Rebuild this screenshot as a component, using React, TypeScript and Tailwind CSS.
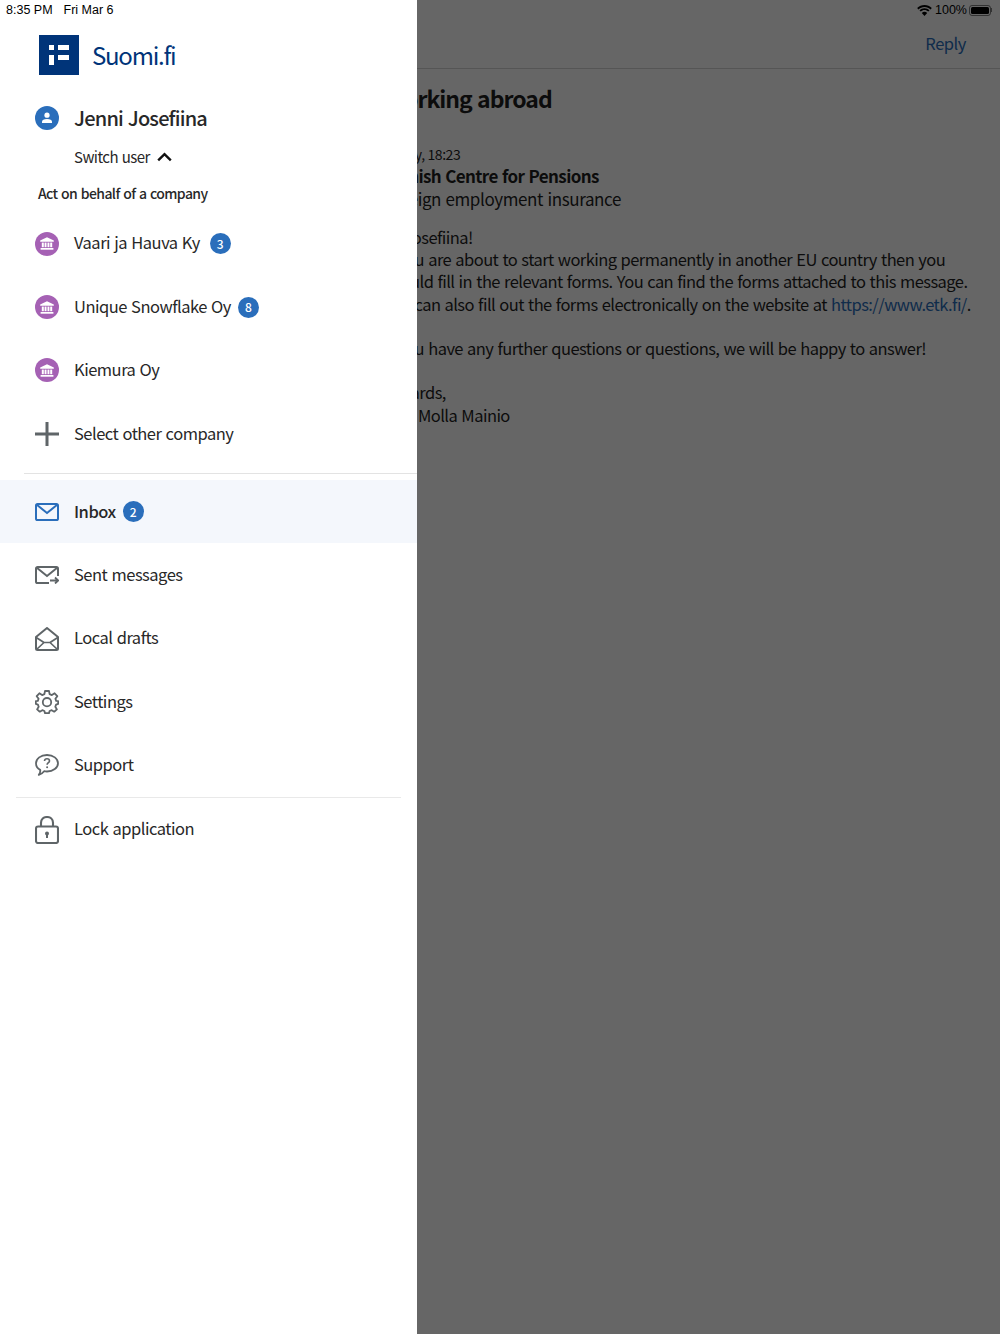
import React from "react";

const font = "font-['Noto_Sans_CJK_SC','Noto_Sans',sans-serif]";

const Badge = ({ n }: { n: number }) => (
  <span className="flex h-[21px] w-[21px] items-center justify-center rounded-full bg-[#2a6ebb] text-[12px] font-medium tracking-normal text-white">
    {n}
  </span>
);

const BankIcon = () => (
  <span className="flex h-6 w-6 items-center justify-center rounded-full bg-[#a561b4]">
    <svg width="14" height="13" viewBox="0 0 14 13" fill="#fff">
      <path d="M7 0.3 L13.8 3.4 V4.8 H0.2 V3.4 Z" />
      <rect x="1.8" y="5.6" width="2" height="4.6" />
      <rect x="4.6" y="5.6" width="1.9" height="4.6" />
      <rect x="7.5" y="5.6" width="1.9" height="4.6" />
      <rect x="10.2" y="5.6" width="2" height="4.6" />
      <rect x="0.6" y="11" width="12.8" height="1.7" />
    </svg>
  </span>
);

const PlusIcon = () => (
  <svg width="24" height="24" viewBox="0 0 24 24" fill="#5f6568">
    <rect x="10.5" y="0" width="3" height="24" />
    <rect x="0" y="10.5" width="24" height="3" />
  </svg>
);

const InboxIcon = () => (
  <svg width="24" height="18" viewBox="0 0 24 18" fill="none" stroke="#2a6ebb" strokeWidth="2">
    <rect x="1" y="1" width="22" height="16" rx="1.6" />
    <path d="M1.5 1.5 L12 10 L22.5 1.5" />
  </svg>
);

const SentIcon = () => (
  <svg width="24" height="18" viewBox="0 0 24 18" fill="none" stroke="#5f6568" strokeWidth="2">
    <path d="M14 17 H2.6 A1.6 1.6 0 0 1 1 15.4 V2.6 A1.6 1.6 0 0 1 2.6 1 H21.4 A1.6 1.6 0 0 1 23 2.6 V10" />
    <path d="M1.5 1.5 L12 10 L22.5 1.5" />
    <path d="M15 14.5 H23 M20 11.5 L23.2 14.5 L20 17.5" strokeWidth="1.8" />
  </svg>
);

const DraftsIcon = () => (
  <svg width="24" height="24" viewBox="0 0 24 24" fill="none" stroke="#5f6568" strokeWidth="2" strokeLinejoin="round">
    <path d="M1 10 L12 1 L23 10 V21.5 A1.5 1.5 0 0 1 21.5 23 H2.5 A1.5 1.5 0 0 1 1 21.5 Z" />
    <path d="M1.5 22.5 L9 15.5 H15 L22.5 22.5 M1.2 10.5 L9 15.5 M22.8 10.5 L15 15.5" strokeWidth="1.7" />
  </svg>
);

const GearIcon = () => (
  <svg width="24" height="24" viewBox="0 0 24 24" fill="none" stroke="#5f6568" strokeWidth="1.8" strokeLinejoin="round">
    <path d="M10 1 H14 L14.6 4.1 L16.9 5.1 L19.6 3.3 L22.3 6.2 L20.4 8.8 L21.2 10.9 L23.2 11.2 V13.8 L21.1 14.6 L20.3 16.7 L21.9 19.4 L19.2 21.7 L16.7 20.2 L14.6 21 L14 23.2 H10 L9.4 21 L7.3 20.2 L4.8 21.7 L2.1 19.4 L3.7 16.7 L2.9 14.6 L0.8 13.8 V11.2 L2.8 10.9 L3.6 8.8 L1.7 6.2 L4.4 3.3 L7.1 5.1 L9.4 4.1 Z" />
    <circle cx="12" cy="12.2" r="4.2" />
  </svg>
);

const SupportIcon = () => (
  <svg width="24" height="22" viewBox="0 0 24 22" fill="none" stroke="#5f6568" strokeWidth="1.8" strokeLinejoin="round">
    <path d="M12 1 C18.2 1 23 4.6 23 9.2 C23 13.8 18.2 17.5 12 17.5 C11 17.5 10 17.4 9.1 17.2 C7.8 18.9 6.2 20.2 3.8 20.9 C5 19.4 5.5 17.8 5.2 15.9 C2.5 14.4 1 12 1 9.2 C1 4.6 5.8 1 12 1 Z" />
    <path d="M9.5 7 C9.6 5.5 10.7 4.8 12 4.8 C13.4 4.8 14.5 5.6 14.5 6.9 C14.5 8.6 12.1 8.7 12.1 10.8" strokeWidth="1.6" />
    <circle cx="12.1" cy="13.2" r="1" fill="#5f6568" stroke="none" />
  </svg>
);

const LockIcon = () => (
  <svg width="24" height="28" viewBox="0 0 24 28" fill="none" stroke="#5f6568" strokeWidth="2.1">
    <rect x="1" y="10.5" width="22" height="16.5" rx="2" />
    <path d="M6 10.5 V6.8 C6 3.2 8.6 1 12 1 C15.4 1 18 3.2 18 6.8 V10.5" />
    <circle cx="12" cy="17.4" r="2" fill="#5f6568" stroke="none" />
    <rect x="11" y="17.5" width="2" height="4.5" fill="#5f6568" stroke="none" />
  </svg>
);

const Row = ({
  icon,
  label,
  badge,
  active,
  badgeGap = "ml-[7px]",
}: {
  icon: React.ReactNode;
  label: string;
  badge?: number;
  active?: boolean;
  badgeGap?: string;
}) => (
  <div className={`flex h-[63.4px] items-center ${active ? "bg-[#f4f7fc]" : ""}`}>
    <div className="flex w-[74px] shrink-0 pl-[35px]">{icon}</div>
    <span className={`pb-[2px] text-[16.5px] leading-none tracking-[-0.5px] text-[#282828] [word-spacing:1px] ${active ? "font-medium" : ""}`}>{label}</span>
    {badge !== undefined && <span className={badgeGap}><Badge n={badge} /></span>}
  </div>
);

const BodyLine = ({ children, className = "" }: { children: React.ReactNode; className?: string }) => (
  <p className={`whitespace-nowrap text-[16.5px] leading-[22.2px] text-[#1f1f1f] [word-spacing:1px] ${className}`}>{children}</p>
);

export default function App() {
  return (
    <div className={`relative h-[1334px] w-[1000px] overflow-hidden bg-[#ffffff] ${font}`}>
      {/* message page behind the drawer */}
      <div className="flex h-full flex-col">
        <div className="flex h-[69px] flex-col border-b border-[#d5d5d5]">
          <div className="flex h-[20px] items-center justify-end gap-[2px] pr-[8px] font-['Liberation_Sans',sans-serif] text-[12.5px] text-black">
            <svg className="mr-[1px]" width="15" height="11" viewBox="0 0 15 11" fill="#000">
              <path d="M7.5 2 C9.9 2 12 2.9 13.6 4.4 L14.8 3.1 C12.9 1.2 10.3 0 7.5 0 C4.7 0 2.1 1.2 0.2 3.1 L1.4 4.4 C3 2.9 5.1 2 7.5 2 Z" />
              <path d="M7.5 5 C8.9 5 10.3 5.6 11.3 6.6 L12.5 5.3 C11.2 4 9.4 3.2 7.5 3.2 C5.6 3.2 3.8 4 2.5 5.3 L3.7 6.6 C4.7 5.6 6.1 5 7.5 5 Z" />
              <path d="M7.5 11 L10.2 7.9 C9.5 7.2 8.5 6.8 7.5 6.8 C6.5 6.8 5.5 7.2 4.8 7.9 Z" />
            </svg>
            <span>100%</span>
            <span className="flex items-center">
              <span className="flex h-[11px] w-[22px] items-center rounded-[3px] border border-black/50 p-[1px]">
                <span className="h-full w-full rounded-[1.5px] bg-black" />
              </span>
              <span className="h-[4px] w-[1px] bg-black/50" />
            </span>
          </div>
          <div className="flex flex-1 items-center justify-end pb-[1px] pr-[34px]">
            <span className="text-[16.5px] tracking-[-0.45px] text-[#2a6ebb]">Reply</span>
          </div>
        </div>
        <div className="pl-[384px]">
          <h1 className="mt-[14px] whitespace-nowrap text-[23px] font-bold leading-[30px] tracking-[-1px] text-[#1f1f1f] [word-spacing:1px]">Working abroad</h1>
          <p className="mt-[32px] whitespace-nowrap text-[14px] leading-[18px] tracking-[-0.4px] text-[#1f1f1f]">Today, 18:23</p>
          <BodyLine className="mt-[2px] text-[17px] font-semibold tracking-[-0.62px]">Finnish Centre for Pensions</BodyLine>
          <BodyLine className="mt-[1px] text-[17px] tracking-[-0.4px]">Foreign employment insurance</BodyLine>
          <BodyLine className="mt-[15.5px] tracking-[-0.56px]">Hi Josefiina!</BodyLine>
          <BodyLine className="tracking-[-0.56px]">If you are about to start working permanently in another EU country then you</BodyLine>
          <BodyLine className="tracking-[-0.56px]">should fill in the relevant forms. You can find the forms attached to this message.</BodyLine>
          <BodyLine className="tracking-[-0.56px]">
            You can also fill out the forms electronically on the website at{" "}
            <span className="text-[#2a6ebb]">https://www.etk.fi/</span>.
          </BodyLine>
          <BodyLine className="mt-[22.2px] tracking-[-0.56px]">If you have any further questions or questions, we will be happy to answer!</BodyLine>
          <BodyLine className="mt-[22.2px] tracking-[-0.56px]">Regards,</BodyLine>
          <BodyLine className="tracking-[-0.56px]">Mrs. Molla Mainio</BodyLine>
        </div>
      </div>

      {/* dim layer */}
      <div className="absolute inset-0 bg-black/60" />

      {/* drawer */}
      <aside className="absolute inset-y-0 left-0 w-[417px] bg-white">
        <div className="flex h-[20px] items-center gap-[11px] pl-[6px] font-['Liberation_Sans',sans-serif] text-[12.5px] text-black">
          <span>8:35 PM</span>
          <span>Fri Mar 6</span>
        </div>
        <div className="mt-[15px] flex items-center pl-[39px]">
          <svg width="40" height="40" viewBox="0 0 40 40">
            <rect width="40" height="40" fill="#003479" />
            <g fill="#fff">
              <rect x="10" y="10" width="5" height="5" />
              <rect x="10" y="20" width="5" height="10" />
              <rect x="19" y="10" width="11" height="5" />
              <rect x="19" y="20" width="11" height="5" />
            </g>
          </svg>
          <span className="ml-[13px] text-[24px] leading-none tracking-[-1.25px] text-[#003479]">Suomi.fi</span>
        </div>
        <div className="mt-[30.5px] flex h-[24px] items-center pl-[35px]">
          <span className="flex h-6 w-6 items-center justify-center rounded-full bg-[#2a6ebb]">
            <svg width="12" height="12" viewBox="0 0 12 12" fill="#fff">
              <circle cx="6" cy="3.2" r="2.6" />
              <path d="M1 11 V9.6 C1 7.9 3 7 6 7 C9 7 11 7.9 11 9.6 V11 Z" />
            </svg>
          </span>
          <span className="ml-[15px] text-[20px] font-medium leading-none tracking-[-0.8px] text-[#282828] [word-spacing:1px]">Jenni Josefiina</span>
        </div>
        <div className="mt-[15px] flex h-[24px] items-center pl-[74px]">
          <span className="text-[15px] leading-none tracking-[-0.55px] text-[#282828] [word-spacing:1px]">Switch user</span>
          <svg className="ml-[7.5px]" width="15" height="10" viewBox="0 0 15 10" fill="none" stroke="#111" strokeWidth="2.4">
            <path d="M1.2 8.4 L7.5 2.2 L13.8 8.4" />
          </svg>
        </div>
        <p className="mt-[12px] h-[24px] pl-[38px] text-[14px] font-medium leading-[24px] tracking-[-0.6px] text-[#282828] [word-spacing:1px]">Act on behalf of a company</p>

        <div className="mt-[7.5px]">
          <Row icon={<BankIcon />} label="Vaari ja Hauva Ky" badge={3} badgeGap="ml-[10px]" />
          <Row icon={<BankIcon />} label="Unique Snowflake Oy" badge={8} />
          <Row icon={<BankIcon />} label="Kiemura Oy" />
          <Row icon={<PlusIcon />} label="Select other company" />
        </div>

        <div className="ml-[24px] mt-[7.5px] border-t border-[#e3e3e3]" />

        <div className="mt-[6px]">
          <Row icon={<InboxIcon />} label="Inbox" badge={2} active />
          <Row icon={<SentIcon />} label="Sent messages" />
          <Row icon={<DraftsIcon />} label="Local drafts" />
          <Row icon={<GearIcon />} label="Settings" />
          <Row icon={<SupportIcon />} label="Support" />
        </div>
        <div className="mx-[16px] border-t border-[#e9e9e9]" />
        <Row icon={<LockIcon />} label="Lock application" />
      </aside>
    </div>
  );
}
